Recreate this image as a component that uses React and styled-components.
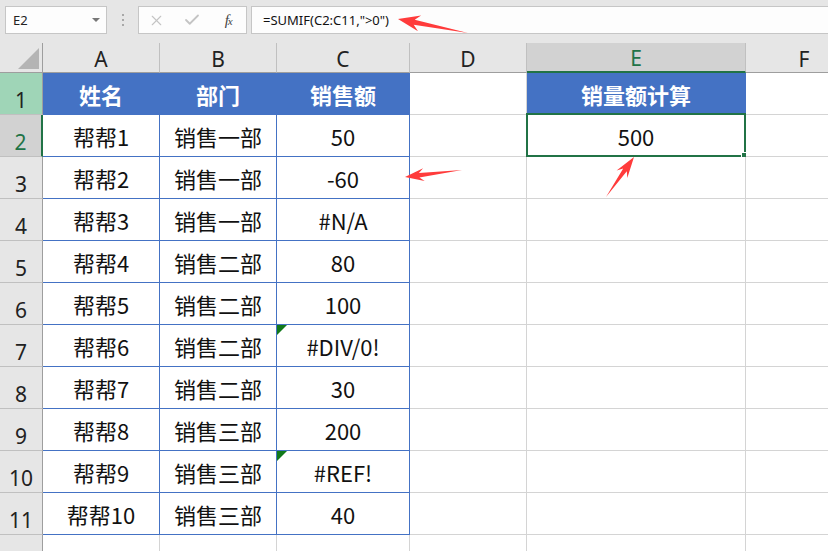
import React from "react";
import styled, { createGlobalStyle } from "styled-components";
import { X, Check } from "lucide-react";

const GlobalStyle = createGlobalStyle`
  html, body {
    margin: 0;
    padding: 0;
    background: #ffffff;
    overflow: hidden;
  }
  body {
    font-family: "Noto Sans CJK SC", "Noto Sans", sans-serif;
  }
`;

const Page = styled.div`
  position: relative;
  width: 828px;
  height: 551px;
  overflow: hidden;
  background: #fff;
`;

const TopBar = styled.div`
  height: 43px;
  background: #e6e6e6;
  display: flex;
  align-items: flex-start;
  padding: 6px 0 0 5px;
  box-sizing: border-box;
`;

const NameBox = styled.div`
  width: 102px;
  height: 28px;
  box-sizing: border-box;
  background: #fdfdfd;
  border: 1px solid #c6c6c6;
  display: flex;
  align-items: center;
  justify-content: space-between;
  padding: 0 6px 0 7px;
  font-family: "Noto Sans", sans-serif;
  font-size: 13px;
  color: #222;
`;

const Caret = styled.span`
  width: 0;
  height: 0;
  border-left: 4px solid transparent;
  border-right: 4px solid transparent;
  border-top: 4px solid #777;
`;

const Dots = styled.div`
  width: 31px;
  height: 28px;
  display: flex;
  flex-direction: column;
  align-items: center;
  justify-content: center;
  gap: 3px;
  span {
    width: 2px;
    height: 2px;
    background: #a8a8a8;
  }
`;

const ButtonBox = styled.div`
  width: 109px;
  height: 28px;
  box-sizing: border-box;
  background: #fdfdfd;
  border: 1px solid #c6c6c6;
  display: grid;
  grid-template-columns: repeat(3, 1fr);
  align-items: center;
  justify-items: center;
  margin-right: 4px;
`;

const Fx = styled.span`
  font-family: "Liberation Serif", serif;
  font-style: italic;
  font-size: 15px;
  color: #444;
  letter-spacing: -1px;
  small {
    font-size: 11px;
  }
`;

const FormulaInput = styled.div`
  flex: 1;
  height: 28px;
  box-sizing: border-box;
  background: #fdfdfd;
  border: 1px solid #c6c6c6;
  border-right: none;
  display: flex;
  align-items: center;
  padding-left: 11px;
  font-family: "Noto Sans", sans-serif;
  font-size: 13px;
  color: #111;
`;

const Sheet = styled.div`
  display: grid;
  grid-template-columns: 43px 117px 117px 133px 117px 219px 117px;
  grid-template-rows: 30px repeat(12, 42px);
`;

const Corner = styled.div`
  position: relative;
  background: #e6e6e6;
  border-right: 1px solid #9e9e9e;
  border-bottom: 1px solid #9e9e9e;
  &::after {
    content: "";
    position: absolute;
    right: 3px;
    bottom: 3px;
    width: 0;
    height: 0;
    border-left: 21px solid transparent;
    border-bottom: 21px solid #b4b4b4;
  }
`;

const ColHead = styled.div`
  background: ${(p) => (p.$active ? "#d2d2d2" : "#e6e6e6")};
  border-right: 1px solid #c0c0c0;
  border-bottom: ${(p) => (p.$active ? "2px solid #217346" : "1px solid #9e9e9e")};
  display: flex;
  align-items: center;
  justify-content: center;
  padding-top: 2px;
  box-sizing: border-box;
  font-family: "Noto Sans", sans-serif;
  font-size: 21px;
  color: ${(p) => (p.$active ? "#217346" : "#222")};
`;

const RowHead = styled.div`
  background: ${(p) => p.$bg};
  border-right: ${(p) => (p.$active ? "2px solid #217346" : "1px solid #9e9e9e")};
  border-bottom: 1px solid #c0c0c0;
  box-sizing: border-box;
  display: flex;
  align-items: flex-end;
  justify-content: center;
  padding-bottom: 1px;
  font-family: "Noto Sans", sans-serif;
  font-size: 21px;
  line-height: 1.2;
  color: ${(p) => (p.$active ? "#217346" : "#222")};
`;

const Cell = styled.div`
  position: relative;
  box-sizing: border-box;
  background: ${(p) => (p.$head ? "#4472c4" : "#fff")};
  border-right: 1px solid ${(p) => (p.$table ? "#4472c4" : "#d4d4d4")};
  border-bottom: 1px solid ${(p) => (p.$table ? "#4472c4" : "#d4d4d4")};
  display: flex;
  align-items: center;
  justify-content: center;
  padding-top: ${(p) => (p.$head ? "0" : "1px")};
  font-family: "Noto Sans CJK SC", "Noto Sans", sans-serif;
  font-size: 22px;
  font-weight: ${(p) => (p.$head ? 700 : 400)};
  color: ${(p) => (p.$head ? "#fff" : "#111")};
  white-space: nowrap;
`;

const Flag = styled.span`
  position: absolute;
  top: 0;
  left: 0;
  width: 0;
  height: 0;
  border-top: 10px solid #11791a;
  border-right: 10px solid transparent;
`;

const Selection = styled.span`
  position: absolute;
  top: -2px;
  left: -1px;
  right: -1px;
  bottom: -1px;
  border: 2px solid #217346;
  pointer-events: none;
`;

const Handle = styled.span`
  position: absolute;
  right: -5px;
  bottom: -5px;
  width: 6px;
  height: 6px;
  background: #217346;
  border: 1px solid #fff;
`;

const Overlay = styled.svg`
  position: absolute;
  top: 0;
  left: 0;
  pointer-events: none;
`;

const columns = ["A", "B", "C", "D", "E", "F"];

const rows = [
  ["姓名", "部门", "销售额", "", "销量额计算"],
  ["帮帮1", "销售一部", "50", "", "500"],
  ["帮帮2", "销售一部", "-60"],
  ["帮帮3", "销售一部", "#N/A"],
  ["帮帮4", "销售二部", "80"],
  ["帮帮5", "销售二部", "100"],
  ["帮帮6", "销售二部", "#DIV/0!"],
  ["帮帮7", "销售二部", "30"],
  ["帮帮8", "销售三部", "200"],
  ["帮帮9", "销售三部", "#REF!"],
  ["帮帮10", "销售三部", "40"],
  [],
];

const flagged = ["#DIV/0!", "#REF!"];

function arrow(tail, tip, headLen, headHalf, neckHalf) {
  const dx = tip[0] - tail[0];
  const dy = tip[1] - tail[1];
  const len = Math.hypot(dx, dy);
  const ux = dx / len;
  const uy = dy / len;
  const nx = -uy;
  const ny = ux;
  const neck = [tip[0] - ux * headLen * 0.75, tip[1] - uy * headLen * 0.75];
  const barb = [tip[0] - ux * headLen, tip[1] - uy * headLen];
  const pts = [
    tail,
    [neck[0] + nx * neckHalf, neck[1] + ny * neckHalf],
    [barb[0] + nx * headHalf, barb[1] + ny * headHalf],
    tip,
    [barb[0] - nx * headHalf, barb[1] - ny * headHalf],
    [neck[0] - nx * neckHalf, neck[1] - ny * neckHalf],
  ];
  return pts.map((p) => p.map((v) => v.toFixed(1)).join(",")).join(" ");
}

const arrows = [
  arrow([468, 33], [398, 19], 22, 8, 2.5),
  arrow([462, 170], [405, 177], 19, 6.5, 2.2),
  arrow([606, 197], [634, 157], 21, 6.5, 2.2),
];

function rowHeadBg(i) {
  if (i === 0) return "#9fd5b7";
  if (i === 1) return "#d2d2d2";
  return "#e6e6e6";
}

export default function App() {
  return (
    <Page>
      <GlobalStyle />
      <TopBar>
        <NameBox>
          E2
          <Caret />
        </NameBox>
        <Dots>
          <span />
          <span />
          <span />
        </Dots>
        <ButtonBox>
          <X size={17} color="#c4c4c4" strokeWidth={1.6} />
          <Check size={18} color="#c4c4c4" strokeWidth={2.4} />
          <Fx>
            f<small>x</small>
          </Fx>
        </ButtonBox>
        <FormulaInput>=SUMIF(C2:C11,"&gt;0")</FormulaInput>
      </TopBar>
      <Sheet>
        <Corner />
        {columns.map((c) => (
          <ColHead key={c} $active={c === "E"}>
            {c}
          </ColHead>
        ))}
        {rows.map((r, i) => (
          <React.Fragment key={i}>
            <RowHead $bg={rowHeadBg(i)} $active={i === 1}>
              {i < 11 ? i + 1 : null}
            </RowHead>
            {[0, 1, 2].map((c) => (
              <Cell key={c} $table={i <= 10} $head={i === 0}>
                {c === 2 && flagged.includes(r[c]) && <Flag />}
                {r[c]}
              </Cell>
            ))}
            <Cell />
            <Cell $head={i === 0} $table={i === 0}>
              {r[4]}
              {i === 1 && (
                <Selection>
                  <Handle />
                </Selection>
              )}
            </Cell>
            <Cell />
          </React.Fragment>
        ))}
      </Sheet>
      <Overlay width="828" height="551" viewBox="0 0 828 551">
        {arrows.map((p, i) => (
          <polygon key={i} points={p} fill="#ff3b3b" />
        ))}
      </Overlay>
    </Page>
  );
}
